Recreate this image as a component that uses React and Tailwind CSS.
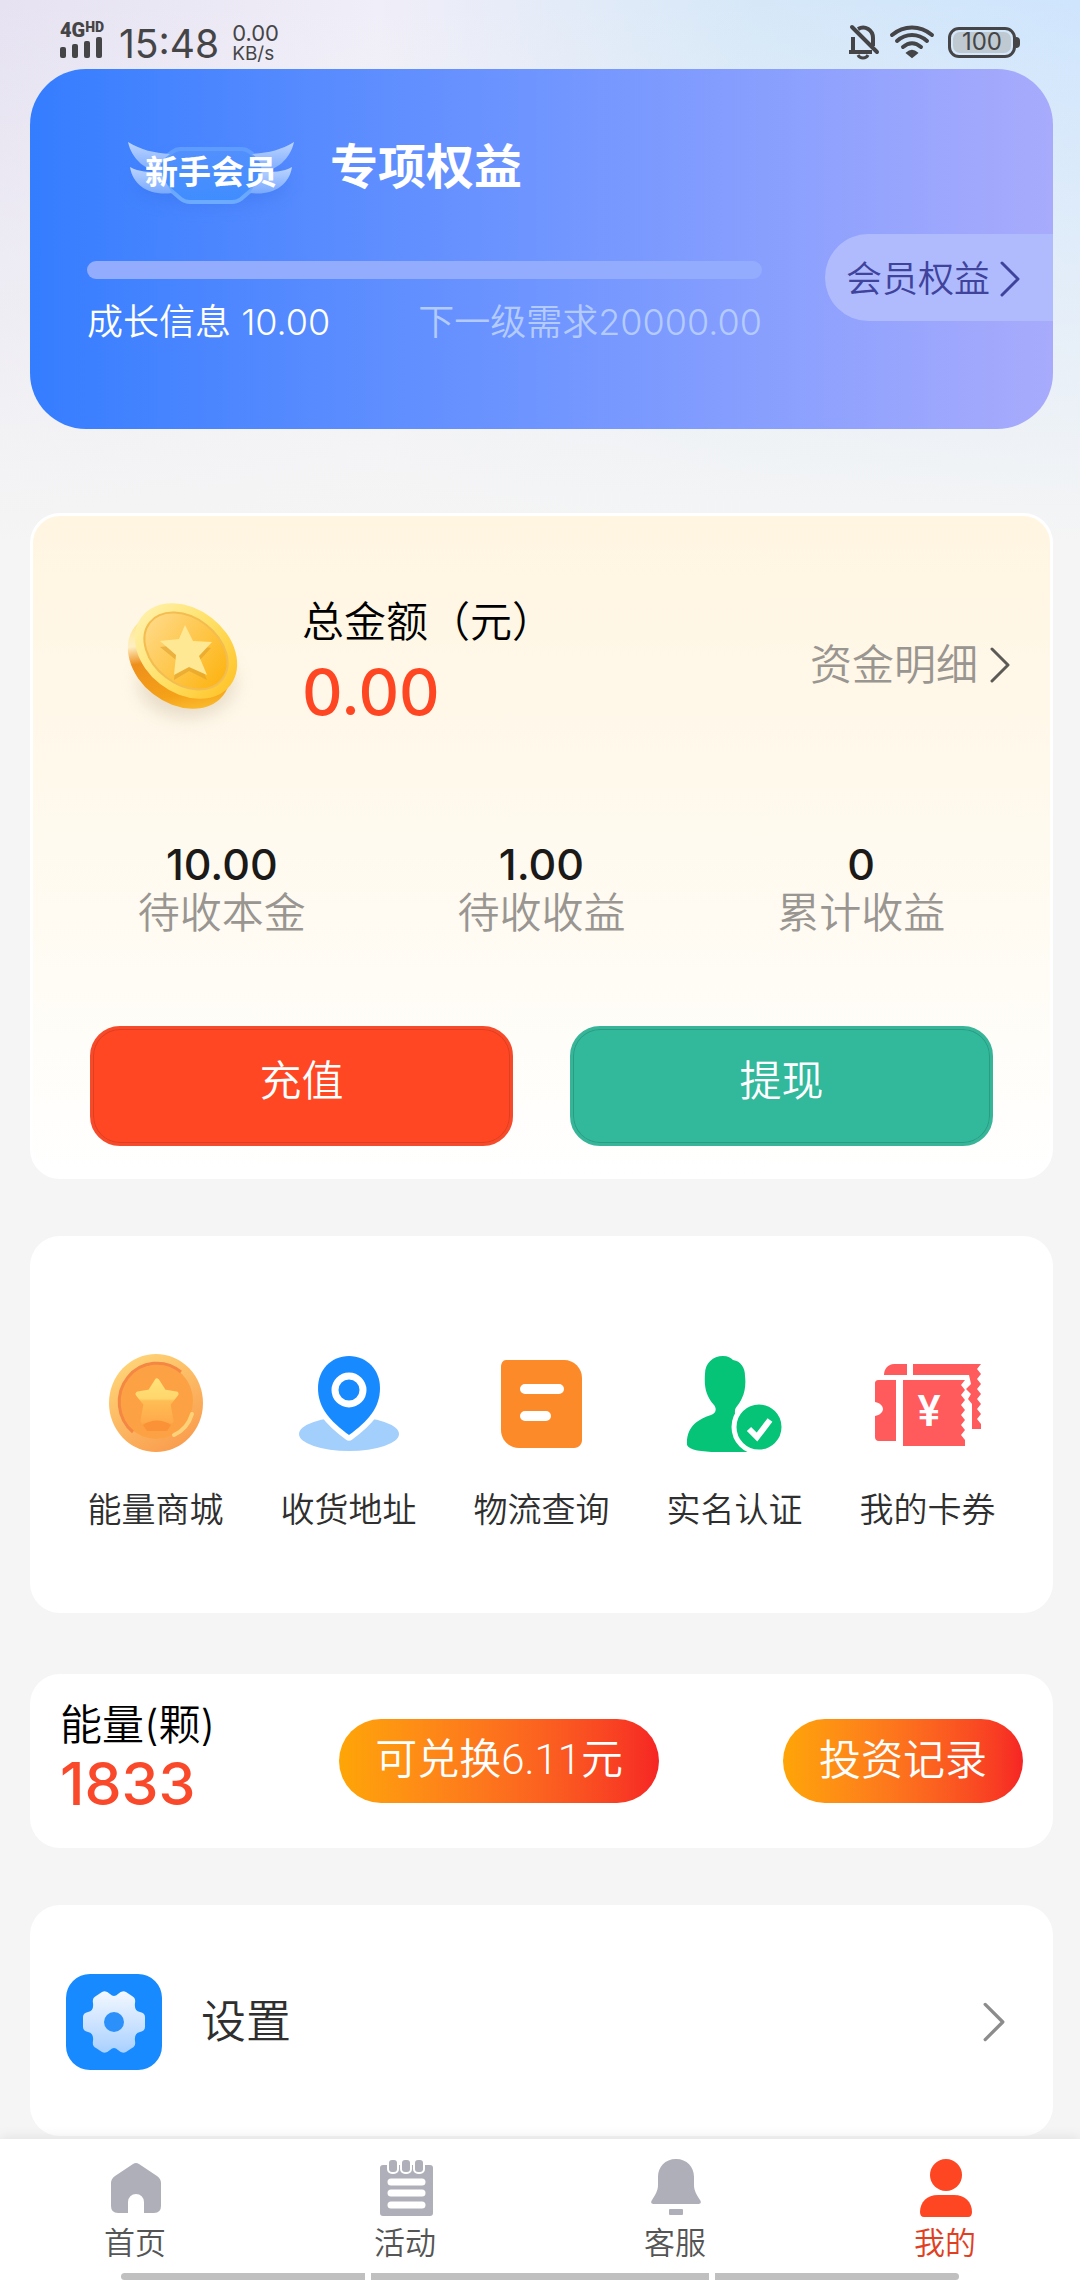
import clsx from "clsx";

const stats = [
  { label: "待收本金", value: "10.00" },
  { label: "待收收益", value: "1.00" },
  { label: "累计收益", value: "0" },
];

const Chevron = ({ className }) => (
  <svg className={clsx("shrink-0", className)} viewBox="0 0 20 36" fill="none" stroke="currentColor">
    <path d="M2 2l16 16L2 34" strokeWidth="3" strokeLinecap="round" strokeLinejoin="round" />
  </svg>
);

const SignalIcon = () => (
  <svg className="w-[43px] h-[21px]" viewBox="0 0 43 21" fill="#454547">
    <rect x="0" y="10" width="6" height="11" rx="2" />
    <rect x="12" y="7" width="6" height="14" rx="2" />
    <rect x="24" y="4" width="6" height="17" rx="2" />
    <rect x="36" y="0" width="6" height="21" rx="2" />
  </svg>
);

const BellOffIcon = () => (
  <svg className="w-[32px] h-[36px]" viewBox="0 0 32 36" fill="none" stroke="#454547" strokeWidth="4">
    <path d="M5 27V13M10 5c7-4 15 1 15 9v8" />
    <path d="M1 28h23" />
    <path d="M10 31c2 4 8 4 10 0" strokeWidth="3" />
    <path d="M4 3l25 25" strokeLinecap="round" />
  </svg>
);

const WifiIcon = () => (
  <svg className="w-[46px] h-[34px]" viewBox="0 0 46 34" fill="none" stroke="#454547" strokeWidth="4" strokeLinecap="round">
    <path d="M3 10c12-10 28-10 40 0" />
    <path d="M8 16c9-8 21-8 30 0" />
    <path d="M14 22c6-5 12-5 18 0" />
    <path d="M18 28c3-3 7-3 10 0l-5 4z" fill="#454547" strokeWidth="2" />
  </svg>
);

const StatusBar = () => (
  <header className="flex h-[69px] items-start justify-between pl-[60px] pr-[60px] pt-[18px] text-[#454547]">
    <div className="flex items-start">
      <div className="w-[46px]">
        <div className="flex h-[19px] items-start font-[Roboto] font-black">
          <span className="text-[20px] leading-[24px]">4G</span>
          <span className="text-[14px] leading-[18px]">HD</span>
        </div>
        <SignalIcon />
      </div>
      <span className="ml-[13px] text-[39px] leading-[52px]">15:48</span>
      <div className="ml-[13px] pt-[5px]">
        <p className="text-[22px] leading-[21px]">0.00</p>
        <p className="text-[19px] leading-[20px]">KB/s</p>
      </div>
    </div>
    <div className="flex items-center gap-[9px] pt-[6px]">
      <BellOffIcon />
      <WifiIcon />
      <div className="ml-1 flex items-center">
        <div className="flex h-[31px] w-[68px] items-center rounded-[11px] border-[3px] border-[#454547] p-[2px]">
          <span className="flex h-full w-full items-center justify-center rounded-[7px] bg-[#bfc9d1] text-[24px] leading-6">
            100
          </span>
        </div>
        <span className="h-[11px] w-[4px] rounded-r-[4px] bg-[#454547]" />
      </div>
    </div>
  </header>
);

const MemberBadge = () => (
  <div className="relative h-[90px] w-[166px]">
    <svg className="h-[90px] w-[166px]" viewBox="0 0 166 90" overflow="visible">
      <defs>
        <linearGradient id="wing" x1="0" y1="0" x2="0" y2="1">
          <stop offset="0" stopColor="#bcd5ff" />
          <stop offset="1" stopColor="#79a9ff" />
        </linearGradient>
        <linearGradient id="plate" x1="0" y1="0" x2="0" y2="1">
          <stop offset="0" stopColor="#5290fd" />
          <stop offset="1" stopColor="#3f8dff" />
        </linearGradient>
        <linearGradient id="plateEdge" x1="0" y1="0" x2="0" y2="1">
          <stop offset="0" stopColor="#5f9cff" />
          <stop offset="1" stopColor="#6cabff" />
        </linearGradient>
        <filter id="badgeShadow" x="-30%" y="-60%" width="160%" height="220%">
          <feGaussianBlur stdDeviation="9" />
        </filter>
      </defs>
      <ellipse cx="83" cy="62" rx="76" ry="22" fill="#2f6be0" opacity="0.35" filter="url(#badgeShadow)" />
      <path
        d="M52 29h62q4 0 8 3l10 8q4 3 3 8l-3 12q-1 4-5 7l-14 12q-4 3-9 3H62q-5 0-9-3L39 67q-4-3-5-7l-3-12q-1-5 3-8l10-8q4-3 8-3z"
        fill="url(#plate)"
        stroke="url(#plateEdge)"
        strokeWidth="4"
      />
      <g fill="url(#wing)">
        <path d="M0 22c13 8 26 11 42 12-7 5-11 10-9 19C18 50 4 40 0 22z" />
        <path d="M2 47c9 5 19 5 30 5l12 21C22 76 5 66 2 47z" />
        <path d="M166 22c-13 8-26 11-42 12 7 5 11 10 9 19 15-3 29-13 33-31z" />
        <path d="M164 47c-9 5-19 5-30 5l-12 21c22 3 39-7 42-26z" />
      </g>
    </svg>
    <span className="absolute inset-0 flex items-center justify-center pt-[15px] text-[33px] font-bold whitespace-nowrap">
      新手会员
    </span>
  </div>
);

const MemberCard = () => (
  <section className="rounded-[56px] bg-linear-to-r from-[#347dff] via-[#6f95ff] to-[#a8abfc] pb-[80px] pl-[57px] pt-[51px] text-white">
    <div className="flex items-center pl-[41px]">
      <MemberBadge />
      <h1 className="ml-9 pt-1 text-[48px] font-bold leading-[72px]">专项权益</h1>
    </div>
    <div className="mt-6 flex items-start gap-[63px]">
      <div className="flex-1 pt-[27px]">
        <div className="h-[18px] rounded-full bg-[#94acfd]" />
        <div className="mt-4 flex justify-between text-[36px] font-[350] leading-[54px]">
          <span>成长信息 10.00</span>
          <span className="text-[#b4cbff]">下一级需求20000.00</span>
        </div>
      </div>
      <button className="flex h-[87px] items-center gap-[10px] rounded-l-full bg-[#b0bbfe] pl-[21px] pr-[33px] pt-[2px] text-[36px] font-[350] text-[#3f439c]">
        会员权益
        <Chevron className="h-[36px] w-[20px]" />
      </button>
    </div>
  </section>
);

const GoldCoin = () => (
  <svg className="h-[126px] w-[126px]" viewBox="0 0 126 126" overflow="visible">
    <defs>
      <linearGradient id="coinEdge" x1="0" y1="0.2" x2="1" y2="0.9">
        <stop offset="0" stopColor="#ffdf6b" />
        <stop offset="0.3" stopColor="#fff0c4" />
        <stop offset="0.45" stopColor="#ee8f1c" />
        <stop offset="0.75" stopColor="#f5a118" />
        <stop offset="1" stopColor="#ffce3c" />
      </linearGradient>
      <linearGradient id="coinRim" x1="0" y1="0" x2="1" y2="0">
        <stop offset="0" stopColor="#fff0a6" />
        <stop offset="0.5" stopColor="#ffe067" />
        <stop offset="1" stopColor="#ffc62d" />
      </linearGradient>
      <linearGradient id="coinFace" x1="0" y1="0" x2="1" y2="0">
        <stop offset="0" stopColor="#ffd882" />
        <stop offset="1" stopColor="#fdb515" />
      </linearGradient>
      <filter id="coinShadow" x="-30%" y="-30%" width="160%" height="160%">
        <feGaussianBlur stdDeviation="9" />
      </filter>
    </defs>
    <ellipse cx="67" cy="86" rx="48" ry="34" fill="#bda98c" opacity="0.35" filter="url(#coinShadow)" />
    <ellipse cx="59" cy="63" rx="56" ry="42" fill="url(#coinEdge)" transform="rotate(38 59 63)" />
    <ellipse cx="66" cy="53" rx="56" ry="42" fill="url(#coinRim)" transform="rotate(38 66 53)" />
    <ellipse cx="66" cy="53" rx="46" ry="33" fill="url(#coinFace)" stroke="#f3bd51" strokeWidth="2" transform="rotate(38 66 53)" />
    <path d="M65 32l8 15 18 3-12 13 8 19-18-9-15 9 2-20-16-13 19-2z" fill="#d99a28" opacity="0.5" />
    <path d="M65 27l8 16 19 1-13 14 8 19-18-8-15 8 2-20-16-14 19-2z" fill="#ffe894" />
  </svg>
);

const MoneyCard = () => (
  <section className="mt-[84px] rounded-[30px] border-[3px] border-white bg-linear-to-b from-[#fff5e1] via-[#fffaef] to-white pb-[30px] pt-[75px]">
    <div className="flex items-center pl-[87px] pr-[40px]">
      <GoldCoin />
      <div className="ml-[56px] flex-1">
        <h2 className="text-[42px] font-[350] leading-[62px] text-black">总金额（元）</h2>
        <p className="text-[63px] font-medium leading-[78px] text-[#ff4623]">0.00</p>
      </div>
      <a href="#detail" className="flex items-center gap-3 pt-2 text-[42px] font-[350] leading-[60px] text-[#999590]">
        资金明细
        <Chevron className="h-[36px] w-[20px] text-[#5c5a57]" />
      </a>
    </div>
    <dl className="mt-[109px] grid grid-cols-3 px-[29px] text-center">
      {stats.map((item) => (
        <div key={item.label} className="flex flex-col-reverse">
          <dt className="text-[42px] font-[350] leading-[50px] text-[#999590]">{item.label}</dt>
          <dd className="text-[43px] font-medium leading-[48px] text-[#1b1a18]">{item.value}</dd>
        </div>
      ))}
    </dl>
    <div className="mt-[88px] grid grid-cols-2 gap-[57px] px-[57px] text-[42px] font-[350] text-white">
      <button className="rounded-[30px] border-[3px] border-[#f64a2a] bg-[#ff4724] pb-[10px] leading-[104px] shadow-[inset_0_0_0_1px_#dd3f20]">
        充值
      </button>
      <button className="rounded-[30px] border-[3px] border-[#37b598] bg-[#32b89b] pb-[10px] leading-[104px] shadow-[inset_0_0_0_1px_#2a9c83]">
        提现
      </button>
    </div>
  </section>
);

const ShopIcon = () => (
  <svg className="h-[108px] w-[108px]" viewBox="0 0 108 108">
    <defs>
      <linearGradient id="shopRim" x1="0.2" y1="0" x2="0.8" y2="1">
        <stop offset="0" stopColor="#ffd679" />
        <stop offset="1" stopColor="#f99a4c" />
      </linearGradient>
      <linearGradient id="shopStar" gradientUnits="userSpaceOnUse" x1="0" y1="28" x2="0" y2="74">
        <stop offset="0" stopColor="#ffe37a" />
        <stop offset="0.45" stopColor="#ffd66c" />
        <stop offset="0.5" stopColor="#ffbd55" />
        <stop offset="1" stopColor="#ffa94a" />
      </linearGradient>
    </defs>
    <ellipse cx="54" cy="53" rx="47" ry="49" fill="url(#shopRim)" />
    <ellipse cx="54" cy="51" rx="37" ry="38" fill="#fda244" />
    <path d="M31 82a37 38 0 0 1 48-60" fill="none" stroke="#f48743" strokeWidth="3" />
    <path d="M72 85c9-4 15-11 18-21" fill="none" stroke="#ffd27a" strokeWidth="4" strokeLinecap="round" />
    <path
      d="M55 31l7 11 12 2-8 10 3 17-14-3-14 3 3-17-8-10 12-2z"
      fill="url(#shopStar)"
      stroke="url(#shopStar)"
      strokeWidth="5"
      strokeLinejoin="round"
    />
    <path d="M41 75c8-6 20-6 28 0l-4 6H45z" fill="#fb9238" />
  </svg>
);

const AddressIcon = () => (
  <svg className="h-[108px] w-[108px]" viewBox="0 0 108 108">
    <ellipse cx="54" cy="84" rx="50" ry="17" fill="#a3cffd" />
    <path
      d="M54 6c18 0 31 14 31 32 0 20-12 33-31 47C35 71 23 58 23 38 23 20 36 6 54 6z"
      fill="#178aff"
      stroke="#fff"
      strokeWidth="11"
      paintOrder="stroke"
      strokeLinejoin="round"
    />
    <circle cx="54" cy="40" r="14" fill="none" stroke="#fff" strokeWidth="7" />
  </svg>
);

const LogisticsIcon = () => (
  <svg className="h-[108px] w-[108px]" viewBox="0 0 108 108">
    <path
      d="M18 10h58c10 0 18 8 18 18v62c0 4-3 8-8 8H31c-10 0-18-8-18-18V17c0-4 2-7 5-7z"
      fill="#fd8a28"
    />
    <path d="M37 39h34M37 66h21" stroke="#fff" strokeWidth="10" strokeLinecap="round" />
  </svg>
);

const VerifyIcon = () => (
  <svg className="h-[108px] w-[108px]" viewBox="0 0 108 108" fill="#05c477">
    <path d="M42 6c5 0 8 2 10 4 8 1 12 8 12 16 1 8 0 16-3 22-3 7-7 9-7 13-1 5 4 8 10 11l20 13v17H36c-15 0-28-2-30-7-1-19 12-26 24-30 5-2 6-6 3-10-8-9-10-18-9-31C24 13 32 6 42 6z" />
    <circle cx="78" cy="77" r="25" stroke="#fff" strokeWidth="5" />
    <path d="M68 79l8 8 13-17" fill="none" stroke="#fff" strokeWidth="6" />
  </svg>
);

const CouponIcon = () => (
  <svg className="h-[108px] w-[108px]" viewBox="0 0 108 108" fill="#ff5a5c">
    <path d="M20 14h13v11H10c0-6 4-11 10-11z" />
    <path d="M39 14h68l-4 5 4 5-4 5 4 5-4 5 4 5-4 5 4 5-4 5 4 5-4 5 4 5v5h-9V54l-4-5 3-5-5-5 5-5-2-9H39z" />
    <path d="M5 30h17v61H5c-3 0-4-2-4-4V66c5-1 8-4 8-7s-3-6-8-7V34c0-3 1-4 4-4z" />
    <path d="M29 30h62l-4 5 4 5-4 5 4 5-4 5 4 5-4 5 4 5-4 5 4 5-4 5 4 5v6H29z" />
    <text x="55" y="76" fill="#fff" fontSize="42" fontWeight="600" textAnchor="middle">
      ¥
    </text>
  </svg>
);

const shortcuts = [
  { label: "能量商城", icon: ShopIcon },
  { label: "收货地址", icon: AddressIcon },
  { label: "物流查询", icon: LogisticsIcon },
  { label: "实名认证", icon: VerifyIcon },
  { label: "我的卡券", icon: CouponIcon },
];

const ShortcutCard = () => (
  <section className="mt-[57px] grid grid-cols-5 rounded-[30px] bg-white pb-[79px] px-[29px] pt-[114px]">
    {shortcuts.map(({ label, icon: Icon }) => (
      <a key={label} href="#shortcut" className="flex flex-col items-center gap-[28px]">
        <Icon />
        <span className="text-[34px] font-[350] leading-[48px] text-[#2f2f2f]">{label}</span>
      </a>
    ))}
  </section>
);

const EnergyCard = () => (
  <section className="mt-[61px] flex items-center justify-between rounded-[30px] bg-white py-[28px] px-[30px]">
    <div>
      <h2 className="text-[42px] font-[350] leading-[46px] text-black">能量(颗)</h2>
      <p className="text-[59px] font-medium leading-[72px] text-[#f9492a]">1833</p>
    </div>
    <button className="rounded-full bg-linear-to-r from-[#fea506] to-[#f62424] px-[36px] pb-[15px] pt-[13px] font-[Roboto,'Noto_Sans_CJK_SC',sans-serif] text-[42px] font-[350] leading-[56px] text-white">
      可兑换6.11元
    </button>
    <button className="rounded-full bg-linear-to-r from-[#fea506] to-[#f62424] px-[36px] pb-[15px] pt-[13px] text-[42px] font-[350] leading-[56px] text-white">
      投资记录
    </button>
  </section>
);

const SettingsIcon = () => (
  <svg className="h-24 w-24" viewBox="0 0 96 96">
    <defs>
      <linearGradient id="gear" x1="0" y1="0" x2="0" y2="1">
        <stop offset="0" stopColor="#f3f8ff" />
        <stop offset="1" stopColor="#a9d0ff" />
      </linearGradient>
    </defs>
    <rect width="96" height="96" rx="24" fill="#178aff" />
    <path
      d="M36 18q4-2 8 2q4 4 8 0q4-4 8-2l6 4q4 2 3 7q-1 8 5 9q5 1 5 5v10q0 4-5 5q-6 1-5 9q1 5-3 7l-6 4q-4 2-8-2q-4-4-8 0q-4 4-8 2l-6-4q-4-2-3-7q1-8-5-9q-5-1-5-5V43q0-4 5-5q6-1 5-9q-1-5 3-7z"
      fill="url(#gear)"
    />
    <circle cx="48" cy="48" r="10" fill="#2c90fb" />
  </svg>
);

const SettingsRow = () => (
  <a href="#settings" className="mt-[57px] flex items-center rounded-[30px] bg-white pb-[66px] pl-9 pr-[48px] pt-[69px]">
    <SettingsIcon />
    <span className="ml-[39px] flex-1 text-[45px] font-[350] leading-[60px] text-[#2f2f2f]">设置</span>
    <Chevron className="h-[40px] w-[22px] text-[#8c8c8c]" />
  </a>
);

const HomeIcon = () => (
  <svg className="h-[60px] w-[60px]" viewBox="0 0 60 60" fill="currentColor">
    <path d="M28 7q3-2 6 0l18 12q4 3 4 7v23q0 7-7 7H39V45a8 8 0 0 0-16 0v11H13q-7 0-7-7V26q0-4 4-7z" />
  </svg>
);

const ActivityIcon = () => (
  <svg className="h-[60px] w-[60px]" viewBox="0 0 60 60" fill="currentColor">
    <rect x="5" y="8" width="53" height="51" rx="3" />
    <g stroke="#fff" strokeWidth="4" paintOrder="stroke">
      <rect x="14" y="3" width="8" height="12" rx="3" />
      <rect x="27" y="3" width="8" height="12" rx="3" />
      <rect x="40" y="3" width="8" height="12" rx="3" />
    </g>
    <path d="M16 25h31M16 36h31M16 48h31" stroke="#fff" strokeWidth="7" strokeLinecap="round" />
  </svg>
);

const ServiceIcon = () => (
  <svg className="h-[60px] w-[60px]" viewBox="0 0 60 60" fill="currentColor">
    <path d="M31 2c11 0 18 8 18 18v8c0 6 3 10 6 15 2 3 0 4-2 4H9c-2 0-4-1-2-4 3-5 6-9 6-15v-8C13 10 20 2 31 2z" />
    <rect x="24" y="52" width="14" height="6" rx="1" />
  </svg>
);

const MineIcon = () => (
  <svg className="h-[60px] w-[60px]" viewBox="0 0 60 60" fill="currentColor">
    <circle cx="31" cy="18" r="16" />
    <path d="M23 38h16c11 0 18 7 18 17q0 5-4 5H9q-4 0-4-5c0-10 7-17 18-17z" />
  </svg>
);

const tabs = [
  { label: "首页", icon: HomeIcon },
  { label: "活动", icon: ActivityIcon },
  { label: "客服", icon: ServiceIcon },
  { label: "我的", icon: MineIcon, active: true },
];

const TabBar = () => (
  <nav className="sticky bottom-0 bg-white shadow-[0_-2px_12px_rgba(0,0,0,0.08)]">
    <div className="grid grid-cols-4 pt-[18px]">
      {tabs.map(({ label, icon: Icon, active }) => (
        <a
          key={label}
          href="#tab"
          className={clsx("flex flex-col items-center gap-[7px]", active ? "text-[#ff4623]" : "text-[#afafb9]")}
        >
          <Icon />
          <span
            className={clsx("text-[31px] font-[350] leading-[38px]", active ? "text-[#e0401f]" : "text-[#555555]")}
          >
            {label}
          </span>
        </a>
      ))}
    </div>
    <div className="mt-[11px] flex gap-[6px] px-[121px]">
      <span className="h-[7px] flex-[244] rounded-l-full bg-[#c0c0c0]" />
      <span className="h-[7px] flex-[338] bg-[#c0c0c0]" />
      <span className="h-[7px] flex-[244] rounded-r-full bg-[#c0c0c0]" />
    </div>
  </nav>
);

export default function App() {
  return (
    <div className="flex min-h-screen flex-col bg-[#f5f5f5] font-[Inter,'Noto_Sans_CJK_SC',sans-serif]">
      <div className="flex-1 bg-[linear-gradient(to_bottom,transparent,#f5f5f5_545px),linear-gradient(to_right,#e6e2f2,#f0eef8_35%,#d6e8f8_70%,#cfe5fd)]">
        <StatusBar />
        <main className="pb-[3px] pl-[30px] pr-[27px]">
          <MemberCard />
          <MoneyCard />
          <ShortcutCard />
          <EnergyCard />
          <SettingsRow />
        </main>
      </div>
      <TabBar />
    </div>
  );
}
